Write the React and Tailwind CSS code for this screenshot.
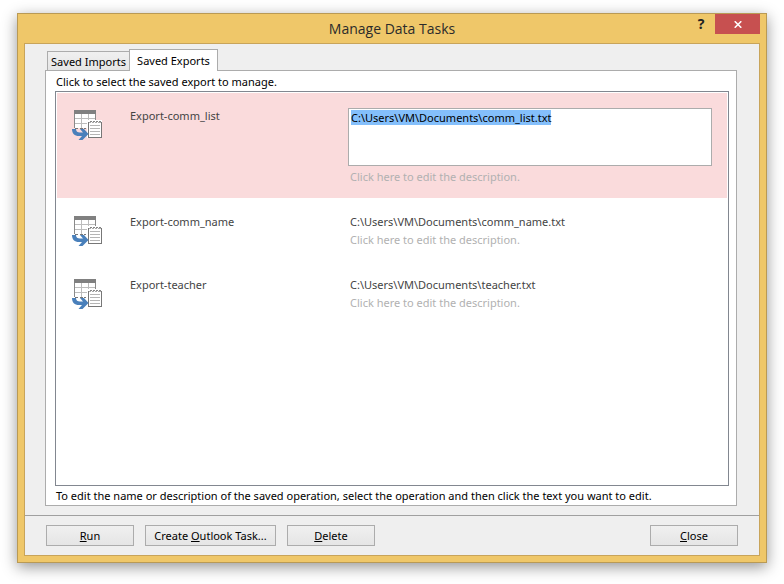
import { useEffect, useRef } from "react";

const tasks = [
  { name: "Export-comm_name", path: "C:\\Users\\VM\\Documents\\comm_name.txt" },
  { name: "Export-teacher", path: "C:\\Users\\VM\\Documents\\teacher.txt" },
];

function ExportIcon() {
  return (
    <svg width="30" height="30" viewBox="0 0 30 30" shapeRendering="crispEdges" aria-hidden="true" className="block">
      <rect x="2" y="0" width="22" height="18" fill="#fff" />
      <rect x="2" y="0" width="22" height="4" fill="#808080" />
      <path d="M2.5 4v14M23.5 4v6" stroke="#8a8a8a" fill="none" />
      <path d="M3 8.5h20M3 13.5h12M9.5 4v14M16.5 4v6" stroke="#bcbcbc" fill="none" />
      <path d="M3 18.500h3M8 18.500h3M12 18.500h2" stroke="#777" fill="none" />
      <rect x="15" y="10" width="15" height="18" fill="#fff" />
      <path d="M16.500 12v15.500h13V12" fill="#fff" stroke="#777" />
      <path d="M17 12.500h2M20 12.500h2M23 12.500h2M26 12.500h3" stroke="#aaa" fill="none" />
      <path d="M18 11.500h2M21 11.500h2M24 11.500h2M27 11.500h2" stroke="#858585" fill="none" />
      <path d="M18 15.500h10M18 18.500h10M18 21.500h10M18 24.500h10" stroke="#b5b5b5" fill="none" />
      <path
        d="M0 19h4c0 2.500 1.500 3.500 4 3.500h3L8 19h4l4.500 5-6 6H6.500l3.500-4H7C2.500 26 0 23.500 0 19z"
        fill="#4a80bb"
        shapeRendering="auto"
      />
    </svg>
  );
}

function Row({ name, selected, children }) {
  return (
    <li className={"flex items-start px-[15px] pb-[12px] " + (selected ? "bg-[#fadbdc] pt-[14px]" : "pt-[15px]")}>
      <div className="w-[58px] shrink-0 pt-[3px]">
        <ExportIcon />
      </div>
      <button type="button" className="w-[218px] shrink-0 text-left leading-[18px] text-[#444]">{name}</button>
      <div className={"min-w-0 flex-1 " + (selected ? "pt-px" : "")}>{children}</div>
    </li>
  );
}

function Description() {
  return (
    <button type="button" className="block pl-[2px] text-left leading-[18px] text-[#b1b1b1]">
      Click here to edit the description.
    </button>
  );
}

function DialogButton({ children, width }) {
  return (
    <button
      type="button"
      className={"h-[21px] border border-[#acacac] bg-linear-to-b from-[#f0f0f0] to-[#e5e5e5] leading-[19px] text-black " + width}
    >
      {children}
    </button>
  );
}

export default function App() {
  const field = useRef(null);
  useEffect(() => {
    field.current.focus();
    field.current.select();
  }, []);

  return (
    <div className="flex min-h-screen flex-col bg-white px-[17px] pt-[13px] pb-[21px] font-['Noto_Sans','Open_Sans',sans-serif] text-[11px]">
      <div
        role="dialog"
        aria-labelledby="title"
        className="flex flex-1 flex-col border border-[#b99a55] bg-[#efc769] px-[6px] pb-[6px] shadow-[0_4px_14px_rgba(0,0,0,0.42)]"
      >
        <header className="grid h-[29px] grid-cols-[1fr_auto_1fr] items-start">
          <span />
          <h1 id="title" className="pt-[4px] font-['Open_Sans','Noto_Sans',sans-serif] text-[14px] leading-[22px] text-[#2b2b2b]">
            Manage Data Tasks
          </h1>
          <div className="flex justify-end">
            <button type="button" aria-label="Help" className="h-[20px] w-[28px] text-[14px] leading-[20px] font-bold text-[#222]">
              ?
            </button>
            <button type="button" aria-label="Close window" className="flex h-[20px] w-[45px] items-center justify-center bg-[#c75050]">
              <svg width="8" height="7" viewBox="0 0 8 7" aria-hidden="true">
                <path d="M.7.300 7.300 6.700M7.300.300.700 6.700" stroke="#fff" strokeWidth="1.600" />
              </svg>
            </button>
          </div>
        </header>

        <div className="flex flex-1 flex-col border border-[#c8a45a] bg-[#efefef]">
          <main className="flex flex-1 flex-col pt-[5px] pr-[22px] pb-[9px] pl-[20px]">
            <div role="tablist" className="relative z-10 -mb-px flex items-end pl-[2px]">
              <button
                type="button"
                role="tab"
                aria-selected="false"
                className="h-[20px] w-[83px] border border-[#acacac] bg-linear-to-b from-[#f0f0f0] to-[#e5e5e5] leading-[20px] whitespace-nowrap text-black"
              >
                Saved Imports
              </button>
              <button
                type="button"
                role="tab"
                aria-selected="true"
                className="-ml-px h-[22px] w-[89px] border border-b-0 border-[#acacac] bg-white leading-[20px] whitespace-nowrap text-black"
              >
                Saved Exports
              </button>
            </div>
            <section role="tabpanel" className="flex flex-1 flex-col border border-[#acacac] bg-white pr-[7px] pl-[9px]">
              <p className="h-[20px] pl-px leading-[22px] text-black">Click to select the saved export to manage.</p>
              <ul className="flex-1 border border-[#828790] p-px">
                <Row name="Export-comm_list" selected>
                  <textarea
                    ref={field}
                    aria-label="Export file path"
                    defaultValue={"C:\\Users\\VM\\Documents\\comm_list.txt"}
                    spellCheck={false}
                    className="block h-[58px] w-full resize-none border border-[#acacac] bg-white px-[2px] py-px leading-[15px] text-black caret-transparent outline-none selection:bg-[#84bffb] selection:text-black"
                  />
                  <div className="pt-[2px]">
                    <Description />
                  </div>
                </Row>
                {tasks.map((task) => (
                  <Row key={task.name} name={task.name}>
                    <div className="pl-[2px] leading-[18px] text-[#444]">{task.path}</div>
                    <Description />
                  </Row>
                ))}
              </ul>
              <p className="h-[19px] pl-px leading-[20px] text-black">
                To edit the name or description of the saved operation, select the operation and then click the text you want to edit.
              </p>
            </section>
          </main>
          <footer className="flex items-center gap-[11px] border-t border-[#a0a0a0] px-[21px] py-[9px]">
            <DialogButton width="w-[88px]"><u>R</u>un</DialogButton>
            <DialogButton width="w-[131px]">Create <u>O</u>utlook Task...</DialogButton>
            <DialogButton width="w-[88px]"><u>D</u>elete</DialogButton>
            <span className="flex-1" />
            <DialogButton width="w-[88px]"><u>C</u>lose</DialogButton>
          </footer>
        </div>
      </div>
    </div>
  );
}
